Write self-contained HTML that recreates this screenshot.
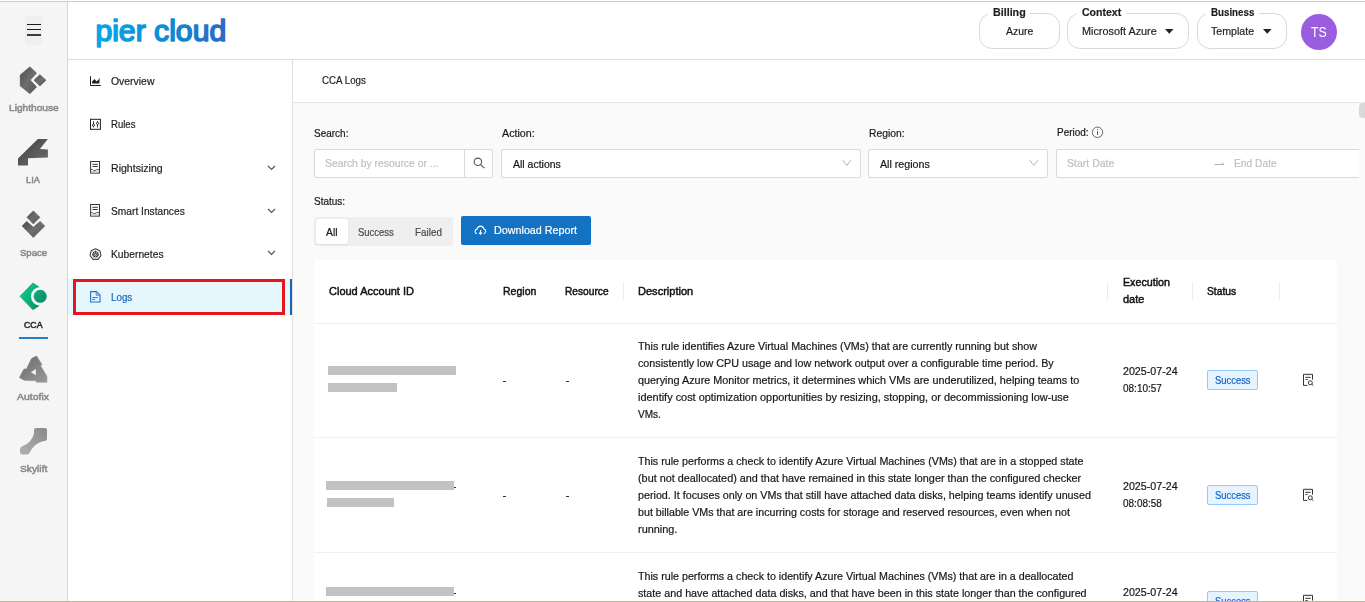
<!DOCTYPE html>
<html><head><meta charset="utf-8">
<style>
*{box-sizing:border-box;margin:0;padding:0}
html,body{width:1365px;height:602px;overflow:hidden;background:#fff;font-family:"Liberation Sans",sans-serif;color:#1f1f1f}
.a{position:absolute}
.t{position:absolute;white-space:nowrap;line-height:1;-webkit-text-stroke:0.2px currentColor}
svg{position:absolute;overflow:visible}
</style></head><body>
<div class="a" style="left:0px;top:1px;width:1365px;height:1px;background:#c9cbcc;"></div>
<div class="a" style="left:0px;top:2px;width:67px;height:599px;background:#f5f5f5;"></div>
<div class="a" style="left:67px;top:2px;width:1px;height:599px;background:#d6d6d6;"></div>
<div class="a" style="left:68px;top:59px;width:1297px;height:1px;background:#dedede;"></div>
<div class="a" style="left:292px;top:60px;width:1px;height:541px;background:#e0e0e0;"></div>
<div class="a" style="left:293px;top:102px;width:1072px;height:1px;background:#e6e6e6;"></div>
<div class="a" style="left:293px;top:103px;width:1072px;height:498px;background:#fafafa;"></div>
<div class="a" style="left:0px;top:601px;width:1365px;height:1px;background:#bdb3a9;"></div>
<div class="a" style="left:25px;top:16px;width:17px;height:29px;background:#efefef;border-radius:3px;"></div>
<div class="a" style="left:26.8px;top:23.8px;width:14px;height:1.1px;background:#1a1a1a;"></div>
<div class="a" style="left:26.8px;top:29.1px;width:14px;height:1.1px;background:#1a1a1a;"></div>
<div class="a" style="left:26.8px;top:34.4px;width:14px;height:1.3px;background:#3a3a3a;"></div>
<svg style="left:14px;top:60px" width="40" height="40" viewBox="0 0 40 40"><defs>
<linearGradient id="gg" x1="0" y1="0" x2="1" y2="1"><stop offset="0" stop-color="#4a4a4a"/><stop offset="0.5" stop-color="#6e6e6e"/><stop offset="1" stop-color="#555"/></linearGradient>
<linearGradient id="gl" x1="0" y1="0" x2="1" y2="1"><stop offset="0" stop-color="#3f3f3f"/><stop offset="1" stop-color="#707070"/></linearGradient>
<linearGradient id="ga" x1="0" y1="0" x2="1" y2="1"><stop offset="0" stop-color="#6a6a6a"/><stop offset="1" stop-color="#9a9a9a"/></linearGradient>
<linearGradient id="gs" x1="1" y1="0" x2="0" y2="1"><stop offset="0" stop-color="#8a8a8a"/><stop offset="1" stop-color="#b0b0b0"/></linearGradient>
<linearGradient id="gc" x1="0" y1="0" x2="1" y2="1"><stop offset="0" stop-color="#10d98c"/><stop offset="1" stop-color="#078a6a"/></linearGradient>
<linearGradient id="gc2" x1="0" y1="0" x2="1" y2="1"><stop offset="0" stop-color="#10b27e"/><stop offset="1" stop-color="#0a846a"/></linearGradient>
</defs>
<path d="M15.9 6.8 L22.6 13.1 L16.4 20.1 L22.6 27 L15.9 33.8 L6.2 25.9 L6.2 15 Z" fill="url(#gg)" stroke="url(#gg)" stroke-width="0.6" stroke-linejoin="round"/>
<path d="M25.9 14.7 L32 20.3 L25.9 25.9 L20 20.3 Z" fill="url(#gg)" stroke="url(#gg)" stroke-width="0.8" stroke-linejoin="round"/>
</svg><div class="t" style="left:8.80px;top:102.87px;font-size:9.6px;color:#888;transform:scaleX(1.0578);transform-origin:0 0;-webkit-text-stroke:0.5px #888;">Lighthouse</div>
<svg style="left:14px;top:132px" width="40" height="40" viewBox="0 0 40 40">
<path d="M23.9 7 L33.9 7 L25.9 16.9 L33.9 17.6 L33.9 25.6 L14 26.2 L14 33.6 L4 33.6 L4 26.6 Z" fill="url(#gl)"/>
</svg><div class="t" style="left:26.10px;top:174.67px;font-size:9.6px;color:#888;transform:scaleX(0.9733);transform-origin:0 0;-webkit-text-stroke:0.5px #888;">LIA</div>
<svg style="left:14px;top:204px" width="40" height="40" viewBox="0 0 40 40">
<path d="M19.3 7 L25.9 13.3 L19.3 19.9 L13 13.3 Z" fill="url(#gg)" stroke="url(#gg)" stroke-width="0.8" stroke-linejoin="round"/>
<path d="M8.2 21.9 L12.7 17.5 L19.3 23.3 L26.1 17.5 L30.7 21.9 L19.3 33.4 Z" fill="url(#gg)" stroke="url(#gg)" stroke-width="0.8" stroke-linejoin="round"/>
</svg><div class="t" style="left:20.00px;top:247.67px;font-size:9.6px;color:#888;transform:scaleX(0.9938);transform-origin:0 0;-webkit-text-stroke:0.5px #888;">Space</div>
<svg style="left:14px;top:276px" width="40" height="40" viewBox="0 0 40 40">
<defs><mask id="mc"><rect x="0" y="0" width="40" height="40" fill="#fff"/><circle cx="26.2" cy="20.3" r="9.3" fill="#000"/></mask></defs>
<path d="M18.9 7 L24.9 11 L24.9 29.8 L18.9 33.6 L6 20.3 Z" fill="url(#gc)" stroke="url(#gc)" stroke-width="1" stroke-linejoin="round" mask="url(#mc)"/>
<circle cx="26.2" cy="20.3" r="6.5" fill="url(#gc2)"/>
</svg><div class="t" style="left:24.00px;top:319.77px;font-size:9.6px;color:#1f1f1f;transform:scaleX(0.9158);transform-origin:0 0;-webkit-text-stroke:0.5px #1f1f1f;">CCA</div>
<div class="a" style="left:19px;top:337px;width:29px;height:2px;background:#1f80c8;"></div>
<svg style="left:14px;top:349px" width="40" height="40" viewBox="0 0 40 40">
<path d="M17.6 9.4 L22.5 7 L27.9 15.4 L26.6 16.9 L32.9 27.3 L32.9 33.2 L22.6 33.2 L22.2 31.8 L10.2 31.3 L5.4 28.6 L10 20 L12.5 20 Z" fill="url(#ga)" stroke="url(#ga)" stroke-width="0.6" stroke-linejoin="round"/>
<path d="M21.9 19.9 L16.9 23.2 L21.9 26.2 Z" fill="#f5f5f5"/>
</svg><div class="t" style="left:17.00px;top:391.67px;font-size:9.6px;color:#888;transform:scaleX(1.0903);transform-origin:0 0;-webkit-text-stroke:0.5px #888;">Autofix</div>
<svg style="left:14px;top:421px" width="40" height="40" viewBox="0 0 40 40">
<path d="M22 7 H31 Q33 7 33 9 V17.8 Q33 19.8 31 19.9 C25.5 20.5 20.5 23.5 16.8 29.5 Q15.3 33.6 12.8 33.6 H8 Q6 33.6 6 31.6 V28 Q6 26.2 8 25.4 C13 23.5 18.2 19.8 20 12.5 V9 Q20 7 22 7 Z" fill="url(#gs)"/>
</svg><div class="t" style="left:19.50px;top:463.67px;font-size:9.6px;color:#888;transform:scaleX(1.0686);transform-origin:0 0;-webkit-text-stroke:0.5px #888;">Skylift</div>
<svg style="left:0;top:0" width="1" height="1"><defs><linearGradient id="lg" x1="0" y1="0" x2="1" y2="0"><stop offset="0" stop-color="#0aa3e6"/><stop offset="1" stop-color="#2a69c6"/></linearGradient></defs></svg><svg style="left:0;top:0" width="300" height="60" viewBox="0 0 300 60"><defs><linearGradient id="lgo" gradientUnits="userSpaceOnUse" x1="95" y1="0" x2="228" y2="0"><stop offset="0" stop-color="#0aa6ea"/><stop offset="0.5" stop-color="#0b8fd3"/><stop offset="1" stop-color="#2d67c6"/></linearGradient></defs>
<text x="95.4" y="40.6" font-family="Liberation Sans" font-size="29.5" font-weight="400" fill="url(#lgo)" stroke="url(#lgo)" stroke-width="1.6" stroke-linejoin="round" textLength="130.8" lengthAdjust="spacingAndGlyphs">pier cloud</text></svg><div class="a" style="left:979px;top:13px;width:81px;height:36px;background:#fff;border:1px solid #d9d9d9;border-radius:13px;"></div>
<div class="a" style="left:988.3px;top:8px;width:42px;height:8px;background:#fff;"></div>
<div class="t" style="left:993.30px;top:6.69px;font-size:11px;color:#1f1f1f;font-weight:700;transform:scaleX(0.9730);transform-origin:0 0;">Billing</div>
<div class="t" style="left:1005.60px;top:25.69px;font-size:11px;color:#1f1f1f;transform:scaleX(0.9505);transform-origin:0 0;">Azure</div>
<div class="a" style="left:1067px;top:13px;width:122px;height:36px;background:#fff;border:1px solid #d9d9d9;border-radius:13px;"></div>
<div class="a" style="left:1076.5px;top:8px;width:49.5px;height:8px;background:#fff;"></div>
<div class="t" style="left:1081.50px;top:6.69px;font-size:11px;color:#1f1f1f;font-weight:700;transform:scaleX(0.9569);transform-origin:0 0;">Context</div>
<div class="t" style="left:1081.70px;top:25.69px;font-size:11px;color:#1f1f1f;transform:scaleX(0.9857);transform-origin:0 0;">Microsoft Azure</div>
<svg style="left:1165px;top:29px" width="9" height="5" viewBox="0 0 9 5"><path d="M0 0 H8.5 L4.25 4.8 Z" fill="#222"/></svg>
<div class="a" style="left:1197px;top:13px;width:90px;height:36px;background:#fff;border:1px solid #d9d9d9;border-radius:13px;"></div>
<div class="a" style="left:1206px;top:8px;width:53.2px;height:8px;background:#fff;"></div>
<div class="t" style="left:1211.00px;top:6.69px;font-size:11px;color:#1f1f1f;font-weight:700;transform:scaleX(0.8854);transform-origin:0 0;">Business</div>
<div class="t" style="left:1211.00px;top:25.69px;font-size:11px;color:#1f1f1f;transform:scaleX(0.9659);transform-origin:0 0;">Template</div>
<svg style="left:1263px;top:29px" width="9" height="5" viewBox="0 0 9 5"><path d="M0 0 H8.5 L4.25 4.8 Z" fill="#222"/></svg>
<div class="a" style="left:1301px;top:14px;width:36px;height:36px;background:#9b5de0;border-radius:50%;"></div>
<div class="t" style="left:1311.30px;top:25.17px;font-size:14.8px;color:#fff;transform:scaleX(0.8351);transform-origin:0 0;-webkit-text-stroke:0;">TS</div>
<div class="t" style="left:111.00px;top:75.86px;font-size:10.8px;color:#1f1f1f;transform:scaleX(0.9646);transform-origin:0 0;">Overview</div>
<div class="t" style="left:111.00px;top:118.86px;font-size:10.8px;color:#1f1f1f;transform:scaleX(0.8864);transform-origin:0 0;">Rules</div>
<div class="t" style="left:111.00px;top:163.46px;font-size:10.8px;color:#1f1f1f;transform:scaleX(0.9791);transform-origin:0 0;">Rightsizing</div>
<div class="t" style="left:111.00px;top:206.36px;font-size:10.8px;color:#1f1f1f;transform:scaleX(0.9452);transform-origin:0 0;">Smart Instances</div>
<div class="t" style="left:111.00px;top:248.86px;font-size:10.8px;color:#1f1f1f;transform:scaleX(0.9512);transform-origin:0 0;">Kubernetes</div>
<svg style="left:267px;top:164.6px" width="9" height="6" viewBox="0 0 9 6"><path d="M1 1 L4.5 4.5 L8 1" fill="none" stroke="#555" stroke-width="1.2"/></svg>
<svg style="left:267px;top:207.5px" width="9" height="6" viewBox="0 0 9 6"><path d="M1 1 L4.5 4.5 L8 1" fill="none" stroke="#555" stroke-width="1.2"/></svg>
<svg style="left:267px;top:250px" width="9" height="6" viewBox="0 0 9 6"><path d="M1 1 L4.5 4.5 L8 1" fill="none" stroke="#555" stroke-width="1.2"/></svg>
<svg style="left:86px;top:72px" width="20" height="20" viewBox="0 0 20 20">
<path d="M4.5 4.2 V13.5 H14.8" fill="none" stroke="#1f1f1f" stroke-width="1"/>
<path d="M6.1 11.6 V9.6 L8.5 7.1 L10.6 9.6 L13 7 L13.6 5.5 L13.4 11.6 Z" fill="#1f1f1f"/>
</svg><svg style="left:86px;top:114px" width="20" height="20" viewBox="0 0 20 20">
<rect x="4.5" y="5.3" width="9.9" height="10" fill="none" stroke="#1f1f1f" stroke-width="1"/>
<path d="M7.5 7.2 V13.4 M11.5 7.2 V13.4" stroke="#1f1f1f" stroke-width="0.9"/>
<circle cx="7.5" cy="11.2" r="1.1" fill="#fff" stroke="#1f1f1f" stroke-width="0.9"/>
<circle cx="11.5" cy="9.4" r="1.1" fill="#fff" stroke="#1f1f1f" stroke-width="0.9"/>
</svg><svg style="left:86px;top:158px" width="20" height="20" viewBox="0 0 20 20"><rect x="4.6" y="3.5" width="8.9" height="11.6" fill="none" stroke="#333" stroke-width="1"/>
<path d="M6.4 6.3 H11.8 M6.4 8.5 H11.8" stroke="#222" stroke-width="0.9"/>
<path d="M4.6 11.6 H6.5 Q7.5 13 9 12.5 L10.6 11.6 H13.5" fill="none" stroke="#444" stroke-width="0.9"/>
<rect x="5" y="13.3" width="8" height="1.5" fill="#bbb"/></svg>
<svg style="left:86px;top:201px" width="20" height="20" viewBox="0 0 20 20"><rect x="4.6" y="3.5" width="8.9" height="11.6" fill="none" stroke="#333" stroke-width="1"/>
<path d="M6.4 6.3 H11.8 M6.4 8.5 H11.8" stroke="#222" stroke-width="0.9"/>
<path d="M4.6 11.6 H6.5 Q7.5 13 9 12.5 L10.6 11.6 H13.5" fill="none" stroke="#444" stroke-width="0.9"/>
<rect x="5" y="13.3" width="8" height="1.5" fill="#bbb"/></svg>
<svg style="left:86px;top:244px" width="20" height="20" viewBox="0 0 20 20">
<path d="M9.50 4.70 L13.88 6.81 L14.96 11.55 L11.93 15.35 L7.07 15.35 L4.04 11.55 L5.12 6.81 Z" fill="none" stroke="#444" stroke-width="1.1" stroke-linejoin="round"/>
<circle cx="9.5" cy="10.3" r="2.7" fill="none" stroke="#333" stroke-width="1"/>
<path d="M9.50 9.30 L9.50 6.70 M10.28 9.68 L12.31 8.06 M10.47 10.52 L13.01 11.10 M9.93 11.20 L11.06 13.54 M9.07 11.20 L7.94 13.54 M8.53 10.52 L5.99 11.10 M8.72 9.68 L6.69 8.06" stroke="#333" stroke-width="0.9"/>
<circle cx="9.5" cy="10.3" r="0.9" fill="#fff" stroke="#333" stroke-width="0.7"/>
</svg><div class="a" style="left:68px;top:279px;width:222px;height:36px;background:#e6f6fd;"></div>
<div class="a" style="left:290px;top:279px;width:2px;height:36px;background:#1565c0;"></div>
<div class="a" style="left:73px;top:279px;width:212px;height:36px;background:transparent;border:3px solid #e5141d;"></div>
<svg style="left:86px;top:287px" width="20" height="20" viewBox="0 0 20 20">
<path d="M4.6 4.6 H10.6 L14 8 V15 H4.6 Z" fill="none" stroke="#1a6fc4" stroke-width="1.1" stroke-linejoin="round"/>
<path d="M10.2 4.6 V8.2 H14" fill="#9cc6ec" stroke="#1a6fc4" stroke-width="0.7"/>
<path d="M6.3 10.6 H11.8 M6.3 12.5 H9" stroke="#1a6fc4" stroke-width="0.9"/>
</svg><div class="t" style="left:111.30px;top:291.56px;font-size:10.8px;color:#1565c0;transform:scaleX(0.9078);transform-origin:0 0;">Logs</div>
<div class="t" style="left:321.60px;top:74.56px;font-size:10.8px;color:#1f1f1f;transform:scaleX(0.9014);transform-origin:0 0;">CCA Logs</div>
<div class="a" style="left:1359px;top:103px;width:6px;height:15px;background:#d9d9d9;border-radius:4px 0 0 4px;"></div>
<div class="t" style="left:314.10px;top:128.06px;font-size:10.8px;color:#161616;transform:scaleX(0.9245);transform-origin:0 0;">Search:</div>
<div class="t" style="left:501.60px;top:127.96px;font-size:10.8px;color:#161616;transform:scaleX(0.9907);transform-origin:0 0;">Action:</div>
<div class="t" style="left:868.80px;top:127.96px;font-size:10.8px;color:#161616;transform:scaleX(0.9566);transform-origin:0 0;">Region:</div>
<div class="t" style="left:1056.50px;top:127.06px;font-size:10.8px;color:#161616;transform:scaleX(0.9208);transform-origin:0 0;">Period:</div>
<svg style="left:1088px;top:122px" width="20" height="20" viewBox="0 0 20 20">
<circle cx="9.5" cy="10.3" r="5.2" fill="none" stroke="#555" stroke-width="0.9"/>
<path d="M9.5 9.2 V12.8" stroke="#555" stroke-width="1"/><circle cx="9.5" cy="7.6" r="0.6" fill="#555"/>
</svg><div class="a" style="left:314px;top:149px;width:179px;height:29px;background:#fff;border:1px solid #d9d9d9;border-radius:2px;"></div>
<div class="a" style="left:464px;top:149px;width:1px;height:29px;background:#d9d9d9;"></div>
<div class="t" style="left:325.20px;top:158.46px;font-size:10.8px;color:#bfbfbf;transform:scaleX(0.9592);transform-origin:0 0;">Search by resource or ...</div>
<svg style="left:470px;top:153px" width="20" height="20" viewBox="0 0 20 20">
<circle cx="7.9" cy="8.8" r="3.7" fill="none" stroke="#555" stroke-width="1.1"/>
<path d="M10.6 11.6 L14.5 15.2" stroke="#555" stroke-width="1.1"/>
</svg><div class="a" style="left:501px;top:149px;width:360px;height:29px;background:#fff;border:1px solid #d9d9d9;border-radius:2px;"></div>
<div class="t" style="left:512.60px;top:158.86px;font-size:10.8px;color:#161616;transform:scaleX(0.9717);transform-origin:0 0;">All actions</div>
<svg style="left:842px;top:159px" width="10" height="8" viewBox="0 0 10 8"><path d="M0.7 1.2 L4.8 6.4 L9 1.2" fill="none" stroke="#aaa" stroke-width="0.9"/></svg>
<div class="a" style="left:868px;top:149px;width:180px;height:29px;background:#fff;border:1px solid #d9d9d9;border-radius:2px;"></div>
<div class="t" style="left:879.60px;top:158.86px;font-size:10.8px;color:#161616;transform:scaleX(0.9880);transform-origin:0 0;">All regions</div>
<svg style="left:1029px;top:159px" width="10" height="8" viewBox="0 0 10 8"><path d="M0.7 1.2 L4.8 6.4 L9 1.2" fill="none" stroke="#aaa" stroke-width="0.9"/></svg>
<div class="a" style="left:1056px;top:149px;width:303px;height:29px;background:#fff;border:1px solid #d9d9d9;border-right:none;border-radius:2px 0 0 2px;"></div>
<div class="t" style="left:1066.60px;top:158.26px;font-size:10.8px;color:#bfbfbf;transform:scaleX(0.9753);transform-origin:0 0;">Start Date</div>
<svg style="left:1214px;top:160px" width="11" height="6" viewBox="0 0 11 6"><path d="M0.5 4.5 H10 L7.5 2.5" fill="none" stroke="#aaa" stroke-width="0.9"/></svg>
<div class="t" style="left:1233.50px;top:158.26px;font-size:10.8px;color:#bfbfbf;transform:scaleX(0.9486);transform-origin:0 0;">End Date</div>
<div class="t" style="left:314.40px;top:195.86px;font-size:10.8px;color:#161616;transform:scaleX(0.9224);transform-origin:0 0;">Status:</div>
<div class="a" style="left:314px;top:217px;width:139px;height:29px;background:#efefef;border-radius:2px;"></div>
<div class="a" style="left:316px;top:219px;width:32px;height:25px;background:#fff;border-radius:3px;box-shadow:0 1px 2px rgba(0,0,0,0.08);"></div>
<div class="t" style="left:326.10px;top:226.86px;font-size:10.8px;color:#161616;transform:scaleX(0.9569);transform-origin:0 0;">All</div>
<div class="t" style="left:358.00px;top:226.86px;font-size:10.8px;color:#4a4a4a;transform:scaleX(0.8767);transform-origin:0 0;">Success</div>
<div class="t" style="left:414.60px;top:226.86px;font-size:10.8px;color:#4a4a4a;transform:scaleX(0.9183);transform-origin:0 0;">Failed</div>
<div class="a" style="left:461px;top:216px;width:130px;height:29px;background:#1472c2;border-radius:2px;"></div>
<svg style="left:470px;top:220px" width="20" height="20" viewBox="0 0 20 20">
<path d="M7 13.5 H6.2 Q5 13.3 5.1 11 Q5.3 9.3 7 9.1 Q7.8 6.2 10.5 6.1 Q13.3 6.2 14 9.1 Q15.8 9.4 15.8 11.3 Q15.6 13.2 14 13.5 H13.6" fill="none" stroke="#fff" stroke-width="1.1"/>
<path d="M10.5 10 V14 M9 12.7 L10.5 14.3 L12 12.7" fill="none" stroke="#fff" stroke-width="1.1"/>
</svg><div class="t" style="left:493.70px;top:224.96px;font-size:10.8px;color:#fff;transform:scaleX(0.9961);transform-origin:0 0;">Download Report</div>
<div class="a" style="left:314px;top:260px;width:1023px;height:341px;background:#fff;"></div>
<div class="a" style="left:314px;top:323px;width:1023px;height:1px;background:#f0f0f0;"></div>
<div class="a" style="left:314px;top:437px;width:1023px;height:1px;background:#f0f0f0;"></div>
<div class="a" style="left:314px;top:552px;width:1023px;height:1px;background:#f0f0f0;"></div>
<div class="a" style="left:623px;top:282px;width:1px;height:18px;background:#ececec;"></div>
<div class="a" style="left:1107px;top:282px;width:1px;height:18px;background:#ececec;"></div>
<div class="a" style="left:1192px;top:282px;width:1px;height:18px;background:#ececec;"></div>
<div class="a" style="left:1279px;top:282px;width:1px;height:18px;background:#ececec;"></div>
<div class="t" style="left:328.60px;top:285.66px;font-size:10.8px;color:#111;transform:scaleX(1.0187);transform-origin:0 0;-webkit-text-stroke:0.45px #111;">Cloud Account ID</div>
<div class="t" style="left:502.60px;top:285.66px;font-size:10.8px;color:#111;transform:scaleX(0.9763);transform-origin:0 0;-webkit-text-stroke:0.45px #111;">Region</div>
<div class="t" style="left:565.40px;top:285.66px;font-size:10.8px;color:#111;transform:scaleX(0.9436);transform-origin:0 0;-webkit-text-stroke:0.45px #111;">Resource</div>
<div class="t" style="left:638.30px;top:285.66px;font-size:10.8px;color:#111;transform:scaleX(1.0222);transform-origin:0 0;-webkit-text-stroke:0.45px #111;">Description</div>
<div class="t" style="left:1122.80px;top:277.06px;font-size:10.8px;color:#111;transform:scaleX(0.9892);transform-origin:0 0;-webkit-text-stroke:0.45px #111;">Execution</div>
<div class="t" style="left:1122.80px;top:293.56px;font-size:10.8px;color:#111;transform:scaleX(1.0138);transform-origin:0 0;-webkit-text-stroke:0.45px #111;">date</div>
<div class="t" style="left:1207.30px;top:285.66px;font-size:10.8px;color:#111;transform:scaleX(0.9516);transform-origin:0 0;-webkit-text-stroke:0.45px #111;">Status</div>
<div class="t" style="left:638.40px;top:340.66px;font-size:10.8px;color:#161616;transform:scaleX(0.9944);transform-origin:0 0;">This rule identifies Azure Virtual Machines (VMs) that are currently running but show</div>
<div class="t" style="left:638.40px;top:357.66px;font-size:10.8px;color:#161616;transform:scaleX(0.9952);transform-origin:0 0;">consistently low CPU usage and low network output over a configurable time period. By</div>
<div class="t" style="left:638.40px;top:374.66px;font-size:10.8px;color:#161616;transform:scaleX(1.0033);transform-origin:0 0;">querying Azure Monitor metrics, it determines which VMs are underutilized, helping teams to</div>
<div class="t" style="left:638.40px;top:391.66px;font-size:10.8px;color:#161616;transform:scaleX(1.0113);transform-origin:0 0;">identify cost optimization opportunities by resizing, stopping, or decommissioning low-use</div>
<div class="t" style="left:638.40px;top:408.66px;font-size:10.8px;color:#161616;transform:scaleX(0.9271);transform-origin:0 0;">VMs.</div>
<div class="a" style="left:328px;top:366px;width:128px;height:9px;background:#c2c2c2;"></div>
<div class="a" style="left:328px;top:383px;width:69px;height:9px;background:#c2c2c2;"></div>
<div class="a" style="left:502.5px;top:381px;width:3.3px;height:1.1px;background:#333;"></div>
<div class="a" style="left:565.5px;top:381px;width:3.3px;height:1.1px;background:#333;"></div>
<div class="t" style="left:1122.70px;top:365.56px;font-size:10.8px;color:#161616;transform:scaleX(0.9887);transform-origin:0 0;">2025-07-24</div>
<div class="t" style="left:1122.70px;top:383.16px;font-size:10.8px;color:#161616;transform:scaleX(0.9257);transform-origin:0 0;">08:10:57</div>
<div class="a" style="left:1207px;top:370.4px;width:51px;height:19.2px;background:#e6f4ff;border:1px solid #91caff;border-radius:2px;"></div>
<div class="t" style="left:1214.70px;top:375.16px;font-size:10.8px;color:#1463c4;transform:scaleX(0.8719);transform-origin:0 0;">Success</div>
<svg style="left:1298px;top:370px" width="20" height="20" viewBox="0 0 20 20">
<path d="M9.3 15.4 H5.5 V4.3 H14.5 V9.6" fill="none" stroke="#333" stroke-width="1"/>
<rect x="7.2" y="5.6" width="5.5" height="1" fill="#ccc"/>
<path d="M7.3 7.5 H12.7 M7.3 9.5 H9.8" stroke="#444" stroke-width="0.9"/>
<circle cx="12.3" cy="12.8" r="2" fill="none" stroke="#333" stroke-width="1"/>
<path d="M13.8 14.3 L15.3 15.6" stroke="#333" stroke-width="1"/>
</svg><div class="t" style="left:638.40px;top:455.66px;font-size:10.8px;color:#161616;transform:scaleX(0.9916);transform-origin:0 0;">This rule performs a check to identify Azure Virtual Machines (VMs) that are in a stopped state</div>
<div class="t" style="left:638.40px;top:472.66px;font-size:10.8px;color:#161616;transform:scaleX(1.0033);transform-origin:0 0;">(but not deallocated) and that have remained in this state longer than the configured checker</div>
<div class="t" style="left:638.40px;top:489.66px;font-size:10.8px;color:#161616;transform:scaleX(0.9942);transform-origin:0 0;">period. It focuses only on VMs that still have attached data disks, helping teams identify unused</div>
<div class="t" style="left:638.40px;top:506.66px;font-size:10.8px;color:#161616;transform:scaleX(0.9915);transform-origin:0 0;">but billable VMs that are incurring costs for storage and reserved resources, even when not</div>
<div class="t" style="left:638.40px;top:523.66px;font-size:10.8px;color:#161616;transform:scaleX(1.0098);transform-origin:0 0;">running.</div>
<div class="a" style="left:326px;top:481px;width:128px;height:9px;background:#c2c2c2;"></div>
<div class="a" style="left:327px;top:498px;width:67px;height:9px;background:#c2c2c2;"></div>
<div class="a" style="left:454px;top:487px;width:2px;height:1px;background:#333;"></div>
<div class="a" style="left:502.5px;top:496px;width:3.3px;height:1.1px;background:#333;"></div>
<div class="a" style="left:565.5px;top:496px;width:3.3px;height:1.1px;background:#333;"></div>
<div class="t" style="left:1122.70px;top:480.56px;font-size:10.8px;color:#161616;transform:scaleX(0.9887);transform-origin:0 0;">2025-07-24</div>
<div class="t" style="left:1122.70px;top:498.16px;font-size:10.8px;color:#161616;transform:scaleX(0.9257);transform-origin:0 0;">08:08:58</div>
<div class="a" style="left:1207px;top:485.4px;width:51px;height:19.2px;background:#e6f4ff;border:1px solid #91caff;border-radius:2px;"></div>
<div class="t" style="left:1214.70px;top:490.16px;font-size:10.8px;color:#1463c4;transform:scaleX(0.8719);transform-origin:0 0;">Success</div>
<svg style="left:1298px;top:485px" width="20" height="20" viewBox="0 0 20 20">
<path d="M9.3 15.4 H5.5 V4.3 H14.5 V9.6" fill="none" stroke="#333" stroke-width="1"/>
<rect x="7.2" y="5.6" width="5.5" height="1" fill="#ccc"/>
<path d="M7.3 7.5 H12.7 M7.3 9.5 H9.8" stroke="#444" stroke-width="0.9"/>
<circle cx="12.3" cy="12.8" r="2" fill="none" stroke="#333" stroke-width="1"/>
<path d="M13.8 14.3 L15.3 15.6" stroke="#333" stroke-width="1"/>
</svg><div class="t" style="left:638.40px;top:570.66px;font-size:10.8px;color:#161616;transform:scaleX(0.9903);transform-origin:0 0;">This rule performs a check to identify Azure Virtual Machines (VMs) that are in a deallocated</div>
<div class="t" style="left:638.40px;top:587.66px;font-size:10.8px;color:#161616;transform:scaleX(0.9938);transform-origin:0 0;">state and have attached data disks, and that have been in this state longer than the configured</div>
<div class="a" style="left:326px;top:587px;width:128px;height:9px;background:#c2c2c2;"></div>
<div class="a" style="left:327px;top:604px;width:67px;height:9px;background:#c2c2c2;"></div>
<div class="a" style="left:454px;top:593px;width:2px;height:1px;background:#333;"></div>
<div class="a" style="left:502.5px;top:602px;width:3.3px;height:1.1px;background:#333;"></div>
<div class="a" style="left:565.5px;top:602px;width:3.3px;height:1.1px;background:#333;"></div>
<div class="t" style="left:1122.70px;top:586.56px;font-size:10.8px;color:#161616;transform:scaleX(0.9887);transform-origin:0 0;">2025-07-24</div>
<div class="t" style="left:1122.70px;top:604.16px;font-size:10.8px;color:#161616;transform:scaleX(0.9257);transform-origin:0 0;">08:07:12</div>
<div class="a" style="left:1207px;top:591.4px;width:51px;height:19.2px;background:#e6f4ff;border:1px solid #91caff;border-radius:2px;"></div>
<div class="t" style="left:1214.70px;top:596.16px;font-size:10.8px;color:#1463c4;transform:scaleX(0.8719);transform-origin:0 0;">Success</div>
<svg style="left:1298px;top:591px" width="20" height="20" viewBox="0 0 20 20">
<path d="M9.3 15.4 H5.5 V4.3 H14.5 V9.6" fill="none" stroke="#333" stroke-width="1"/>
<rect x="7.2" y="5.6" width="5.5" height="1" fill="#ccc"/>
<path d="M7.3 7.5 H12.7 M7.3 9.5 H9.8" stroke="#444" stroke-width="0.9"/>
<circle cx="12.3" cy="12.8" r="2" fill="none" stroke="#333" stroke-width="1"/>
<path d="M13.8 14.3 L15.3 15.6" stroke="#333" stroke-width="1"/>
</svg><div class="a" style="left:0px;top:601px;width:1365px;height:1px;background:#bdb3a9;"></div>
</body></html>
